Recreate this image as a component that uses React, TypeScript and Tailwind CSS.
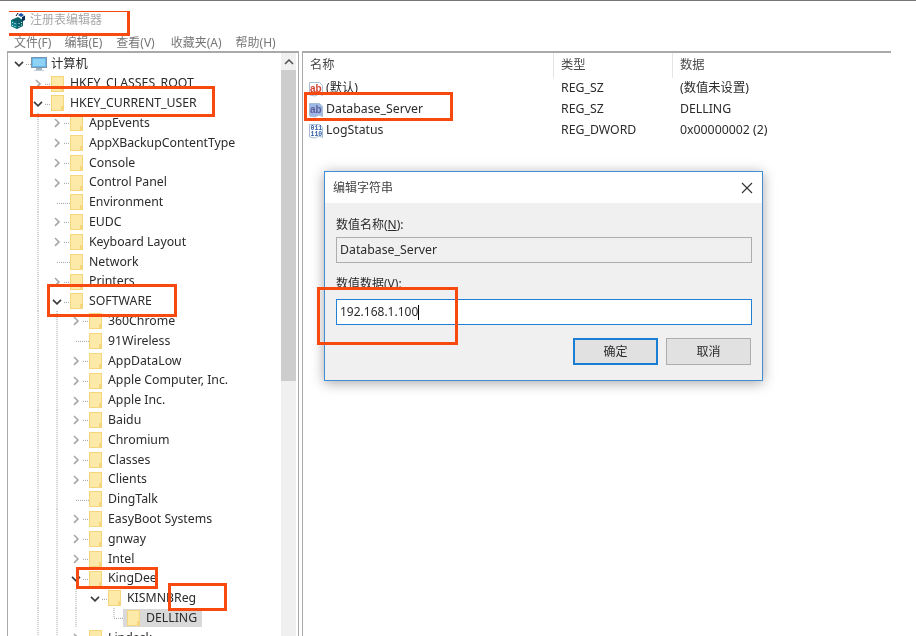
const font = "font-['Noto_Sans','Noto_Sans_CJK_SC',sans-serif]";

type Row = {
  label: string;
  level: number;
  state?: "open" | "closed" | "leaf";
  guides?: number[];
  selected?: boolean;
};

const g1 = [1];
const g2 = [1, 2];
const g3 = [1, 2, 3];

const rows: Row[] = [
  { label: "HKEY_CLASSES_ROOT", level: 1, state: "closed" },
  { label: "HKEY_CURRENT_USER", level: 1, state: "open" },
  { label: "AppEvents", level: 2, state: "closed", guides: g1 },
  { label: "AppXBackupContentType", level: 2, state: "closed", guides: g1 },
  { label: "Console", level: 2, state: "closed", guides: g1 },
  { label: "Control Panel", level: 2, state: "closed", guides: g1 },
  { label: "Environment", level: 2, state: "leaf", guides: g1 },
  { label: "EUDC", level: 2, state: "closed", guides: g1 },
  { label: "Keyboard Layout", level: 2, state: "closed", guides: g1 },
  { label: "Network", level: 2, state: "leaf", guides: g1 },
  { label: "Printers", level: 2, state: "closed", guides: g1 },
  { label: "SOFTWARE", level: 2, state: "open", guides: g1 },
  { label: "360Chrome", level: 3, state: "closed", guides: g2 },
  { label: "91Wireless", level: 3, state: "leaf", guides: g2 },
  { label: "AppDataLow", level: 3, state: "closed", guides: g2 },
  { label: "Apple Computer, Inc.", level: 3, state: "closed", guides: g2 },
  { label: "Apple Inc.", level: 3, state: "closed", guides: g2 },
  { label: "Baidu", level: 3, state: "closed", guides: g2 },
  { label: "Chromium", level: 3, state: "closed", guides: g2 },
  { label: "Classes", level: 3, state: "closed", guides: g2 },
  { label: "Clients", level: 3, state: "closed", guides: g2 },
  { label: "DingTalk", level: 3, state: "leaf", guides: g2 },
  { label: "EasyBoot Systems", level: 3, state: "closed", guides: g2 },
  { label: "gnway", level: 3, state: "closed", guides: g2 },
  { label: "Intel", level: 3, state: "closed", guides: g2 },
  { label: "KingDee", level: 3, state: "open", guides: g2 },
  { label: "KISMNBReg", level: 4, state: "open", guides: g3 },
  { label: "DELLING", level: 5, state: "leaf", guides: g3, selected: true },
  { label: "Lindesk", level: 3, state: "closed", guides: g2 },
];

function Guide({ on }: { on: boolean }) {
  return (
    <svg viewBox="0 0 19 20" preserveAspectRatio="none" className="h-full w-[19px] shrink-0">
      {on && <path d="M10 0V20" stroke="#a0a0a0" strokeDasharray="1 1" fill="none" />}
    </svg>
  );
}

function Branch({ state, line }: { state: "open" | "closed" | "leaf"; line: boolean }) {
  return (
    <svg viewBox="0 0 23 20" preserveAspectRatio="none" className="h-full w-[23px] shrink-0">
      {line && <path d={state === "leaf" ? "M10 0V10" : "M10 0V20"} stroke="#a0a0a0" strokeDasharray="1 1" fill="none" />}
      {state === "leaf" && <path d="M10 10.5H23" stroke="#a0a0a0" strokeDasharray="1 1" fill="none" />}
      {state !== "leaf" && <path d="M17 10.5H23" stroke="#a0a0a0" strokeDasharray="1 1" fill="none" />}
      {state !== "leaf" && <rect x="4" y="3" width="12" height="14" fill="#fff" />}
      {state === "closed" && <path d="M8 6L12 10L8 14" stroke="#a8a8a8" strokeWidth="1.6" fill="none" />}
      {state === "open" && <path d="M6 8L10 12L14 8" stroke="#3a3a3a" strokeWidth="1.6" fill="none" />}
    </svg>
  );
}

function Folder() {
  return (
    <svg viewBox="0 0 13 16" className="h-4 w-[13px] shrink-0">
      <rect x="0.5" y="0.5" width="12" height="15" fill="#fdeaa8" stroke="#f5d67c" />
      <rect x="10" y="11" width="2.5" height="4.500" fill="#f5d67c" />
    </svg>
  );
}

function TreeRow({ row }: { row: Row }) {
  const guides = row.guides ?? [];
  const cols = [];
  for (let i = 0; i < row.level; i++) {
    cols.push(<Guide key={i} on={guides.includes(i)} />);
  }
  return (
    <div className="flex h-[19.8px] items-center whitespace-nowrap pl-px">
      {cols}
      <Branch state={row.state ?? "closed"} line={guides.includes(row.level) || row.level === 5} />
      {row.selected ? (
        <div className="-ml-1 flex h-[18px] items-center bg-[#d9d9d9] pl-1 pr-[5px]">
          <Folder />
          <span className="ml-[6px]">{row.label}</span>
        </div>
      ) : (
        <>
          <Folder />
          <span className="ml-[6px]">{row.label}</span>
        </>
      )}
    </div>
  );
}

function RegIcon() {
  return (
    <svg viewBox="0 0 16 17" className="h-[17px] w-4">
      <path d="M1 8L8 5L13 8V14L7 17L1 14Z" fill="#0b5f68" />
      <path d="M1 8L7 11V17L1 14Z" fill="#13808a" />
      <path d="M2 10h1v1H2zM4.500 11h1v1h-1zM2 13h1v1H2zM4.500 14h1v1h-1zM8.500 11h1v1h-1zM11 10h1v1h-1zM8.500 14h1v1h-1zM11 12.500h1v1h-1z" fill="#bff0ee" />
      <path d="M8 3L11 1L14 3L11 5Z" fill="#1a4fa0" />
      <path d="M12 5L15 3.500V8L12 9.500Z" fill="#0a2f5c" />
      <path d="M6 4L8 1" stroke="#111" />
    </svg>
  );
}

function ComputerIcon() {
  return (
    <svg viewBox="0 0 16 16" className="h-4 w-4 shrink-0">
      <rect x="0.500" y="1.500" width="15" height="10" fill="#63b6ee" stroke="#7b97ad" />
      <rect x="2" y="3" width="12" height="7" fill="#8ed2f6" />
      <rect x="5" y="12" width="6" height="2" fill="#9fb2c0" />
      <rect x="3" y="14" width="10" height="1" fill="#c3ced6" />
    </svg>
  );
}

function ValueIcon({ kind }: { kind: "str" | "sel" | "num" }) {
  const page = kind === "sel" ? "#9db9e4" : "#ffffff";
  return (
    <svg viewBox="0 0 16 16" className="h-4 w-4 shrink-0">
      <path d="M1.500 1.500H11.500L14.500 4.500V14.500L11 13L7 15L1.500 14Z" fill={page} stroke="#a9bdd6" />
      {kind === "num" ? (
        <g fontFamily="Liberation Mono, monospace" fontSize="6.500" fontWeight="700" fill="#2f5da8">
          <text x="2.500" y="6.500">011</text>
          <text x="2.500" y="12.500">110</text>
        </g>
      ) : (
        <text x="2" y="10.500" fontFamily="Liberation Sans, sans-serif" fontSize="10" fontWeight="700" fill={kind === "sel" ? "#5f5f9c" : "#d4412f"}>
          ab
        </text>
      )}
    </svg>
  );
}

function Mark({ className }: { className: string }) {
  return <div className={`absolute border-[3px] border-[#f8490f] ${className}`} />;
}

const values = [
  { name: "(默认)", type: "REG_SZ", data: "(数值未设置)", icon: "str" as const },
  { name: "Database_Server", type: "REG_SZ", data: "DELLING", icon: "sel" as const },
  { name: "LogStatus", type: "REG_DWORD", data: "0x00000002 (2)", icon: "num" as const },
];

export default function App() {
  return (
    <div className={`relative flex h-[636px] w-[916px] flex-col overflow-hidden border-t border-[#777] bg-white text-[12.3px] text-[#2b2b2b] blur-[0.3px] ${font}`}>
      {/* Title bar */}
      <div className="flex h-[31px] shrink-0 items-center pl-[10px] pt-[7px]">
        <RegIcon />
        <span className="ml-1 text-[12px] text-[#a8a8a8]">注册表编辑器</span>
      </div>

      {/* Menu */}
      <div className="flex h-[19px] shrink-0 items-center gap-[14px] pl-[14px] pt-[2px] text-[12px] text-[#777]">
        <span>文件(F)</span>
        <span className="-ml-px">编辑(E)</span>
        <span>查看(V)</span>
        <span className="ml-[2px]">收藏夹(A)</span>
        <span>帮助(H)</span>
      </div>

      {/* Panes */}
      <div className="flex min-h-0 flex-1 pl-[7px]">
        <div className="flex w-[292px] shrink-0 border-l border-r border-t-2 border-[#a9a9a9]">
          <div className="min-w-0 flex-1 overflow-hidden pt-px">
            <div className="flex h-[19.8px] items-center pl-px">
              <Branch state="open" line={false} />
              <div className="-ml-[1px]">
                <ComputerIcon />
              </div>
              <span className="ml-[4px]">计算机</span>
            </div>
            {rows.map((row) => (
              <TreeRow key={row.label} row={row} />
            ))}
          </div>
          <div className="mr-[2px] flex w-[15px] shrink-0 flex-col bg-[#f0f0f0]">
            <div className="flex h-[17px] items-center justify-center">
              <svg viewBox="0 0 10 6" className="h-[6px] w-[10px]">
                <path d="M1 5L5 1L9 5" stroke="#505050" strokeWidth="1.500" fill="none" />
              </svg>
            </div>
            <div className="h-[311px] bg-[#cdcdcd]" />
          </div>
        </div>

        <div className="ml-[3px] w-[589px] shrink-0 border-l border-t-2 border-[#a9a9a9]">
          <div className="grid h-[25px] grid-cols-[251px_119px_1fr] text-[#4a4a4a]">
            <div className="flex items-center border-r border-[#e5e5e5] pl-[7px]">名称</div>
            <div className="flex items-center border-r border-[#e5e5e5] pl-[7px]">类型</div>
            <div className="flex items-center pl-[7px]">数据</div>
          </div>
          {values.map((v) => (
            <div key={v.name} className="grid h-[21px] grid-cols-[251px_119px_1fr] items-center whitespace-nowrap">
              <div className="flex items-center pl-[5px]">
                <ValueIcon kind={v.icon} />
                <span className="ml-[2px]">{v.name}</span>
              </div>
              <div className="pl-[7px]">{v.type}</div>
              <div className="pl-[7px]">{v.data}</div>
            </div>
          ))}
        </div>
      </div>

      {/* Edit string dialog */}
      <div className="absolute left-[324px] top-[170px] flex h-[210px] w-[439px] flex-col border border-[#3f8fd2] bg-[#f0f0f0] shadow-[0_2px_12px_rgba(0,0,0,0.35)]">
        <div className="flex h-[31px] shrink-0 items-center justify-between bg-white pl-2 pr-[9px] text-[12px] text-[#444]">
          <span>编辑字符串</span>
          <svg viewBox="0 0 12 12" className="h-3 w-3">
            <path d="M1 1L11 11M11 1L1 11" stroke="#333" strokeWidth="1.100" />
          </svg>
        </div>
        <div className="flex flex-1 flex-col pl-[11px] pr-[10px] pt-[14px]">
          <div className="flex h-4 items-center text-[12px]">
            数值名称(<span className="underline">N</span>):
          </div>
          <div className="mt-1 flex h-[26px] items-center border border-[#adadad] bg-[#f0f0f0] pl-[3px]">
            Database_Server
          </div>
          <div className="mt-[13px] flex h-4 items-center text-[12px]">
            数值数据(<span className="underline">V</span>):
          </div>
          <div className="mt-[7px] flex h-[26px] items-center border border-[#1f80d6] bg-white pl-[3px] text-[12px]">
            192.168.1.100
            <span className="h-[15px] w-px bg-black" />
          </div>
          <div className="mt-[13px] flex justify-end gap-2 pr-px text-[12px]">
            <div className="flex h-[27px] w-[85px] items-center justify-center border-2 border-[#1a7fd4] bg-[#e1e1e1]">确定</div>
            <div className="flex h-[27px] w-[85px] items-center justify-center border border-[#adadad] bg-[#e1e1e1]">取消</div>
          </div>
        </div>
      </div>

      {/* Red annotations */}
      <Mark className="left-[9px] top-[10px] h-[25px] w-[121px] border-l-0 border-t-[1px]" />
      <Mark className="left-[30px] top-[85px] h-[31px] w-[185px]" />
      <Mark className="left-[47px] top-[283px] h-[33px] w-[130px]" />
      <Mark className="left-[76px] top-[566px] h-[22px] w-[82px]" />
      <Mark className="left-[168px] top-[582px] h-[28px] w-[59px]" />
      <Mark className="left-[304px] top-[91px] h-[29px] w-[149px]" />
      <Mark className="left-[317px] top-[286px] h-[58px] w-[141px]" />
    </div>
  );
}
